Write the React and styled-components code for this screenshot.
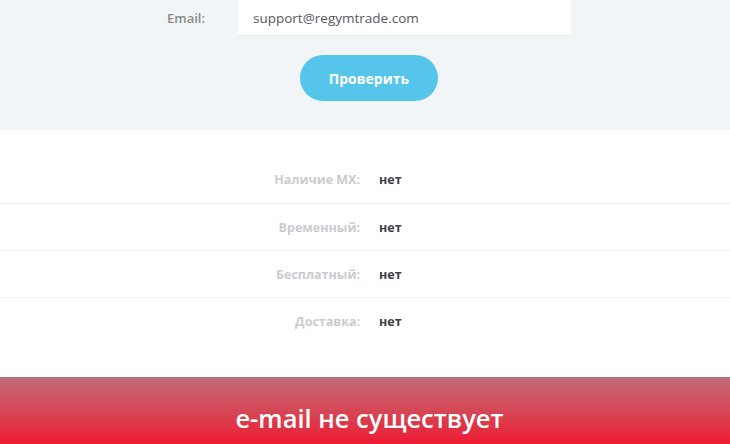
import React from "react";
import styled, { createGlobalStyle } from "styled-components";

const Global = createGlobalStyle`
  html, body { margin: 0; padding: 0; background: #ffffff; }
  body { font-family: "Open Sans", "Noto Sans", sans-serif; overflow: hidden; }
  * { box-sizing: border-box; }
`;

const Page = styled.div`
  width: 730px;
  height: 444px;
  display: flex;
  flex-direction: column;
  overflow: hidden;
`;

const FormSection = styled.section`
  background: #f2f5f7;
  height: 130px;
  flex-shrink: 0;
  display: flex;
  flex-direction: column;
  align-items: center;
`;

const FieldRow = styled.div`
  display: flex;
  align-items: center;
  width: 100%;
`;

const FieldLabel = styled.label`
  width: 205px;
  text-align: right;
  font-size: 13px;
  font-weight: 600;
  color: #8a8a8a;
`;

const FieldInput = styled.div`
  margin-left: 33px;
  width: 333px;
  height: 35px;
  background: #ffffff;
  display: flex;
  align-items: center;
  padding-left: 15px;
  font-size: 13.5px;
  font-weight: 500;
  color: #555a5e;
  box-shadow: 0 1px 1px rgba(0, 0, 0, 0.04);
`;

const CheckButton = styled.button`
  margin-top: 20px;
  margin-left: 8px;
  width: 138px;
  height: 46px;
  border: none;
  border-radius: 23px;
  background: #56c5ec;
  color: #ffffff;
  font-family: inherit;
  font-size: 14px;
  font-weight: 700;
`;

const ResultSection = styled.section`
  padding-top: 26px;
  height: 247px;
  flex-shrink: 0;
`;

const ResultRow = styled.div`
  display: flex;
  align-items: center;
  height: 47px;
  border-top: ${(p) => (p.$first ? "none" : "1px solid #eeeeee")};
`;

const ResultLabel = styled.span`
  width: 360px;
  text-align: right;
  font-size: 12.5px;
  font-weight: 700;
  color: #c9cccf;
`;

const ResultValue = styled.span`
  margin-left: 19px;
  font-size: 12.5px;
  font-weight: 700;
  color: #3d4046;
`;

const Banner = styled.div`
  flex-shrink: 0;
  height: 90px;
  display: flex;
  justify-content: center;
  padding-top: 23px;
  padding-left: 9px;
  background: linear-gradient(to bottom, #c06b79 0px, #d9404f 40px, #ee1a32 67px, #ee1a32 100%);
  color: #ffffff;
  font-size: 25.5px;
  line-height: 36px;
  font-weight: 600;
`;

const rows = [
  ["Наличие MX:", "нет"],
  ["Временный:", "нет"],
  ["Бесплатный:", "нет"],
  ["Доставка:", "нет"],
];

export default function App() {
  return (
    <Page>
      <Global />
      <FormSection>
        <FieldRow>
          <FieldLabel>Email:</FieldLabel>
          <FieldInput>support@regymtrade.com</FieldInput>
        </FieldRow>
        <CheckButton>Проверить</CheckButton>
      </FormSection>
      <ResultSection>
        {rows.map(([l, v], i) => (
          <ResultRow key={l} $first={i === 0}>
            <ResultLabel>{l}</ResultLabel>
            <ResultValue>{v}</ResultValue>
          </ResultRow>
        ))}
      </ResultSection>
      <Banner>e-mail не существует</Banner>
    </Page>
  );
}
